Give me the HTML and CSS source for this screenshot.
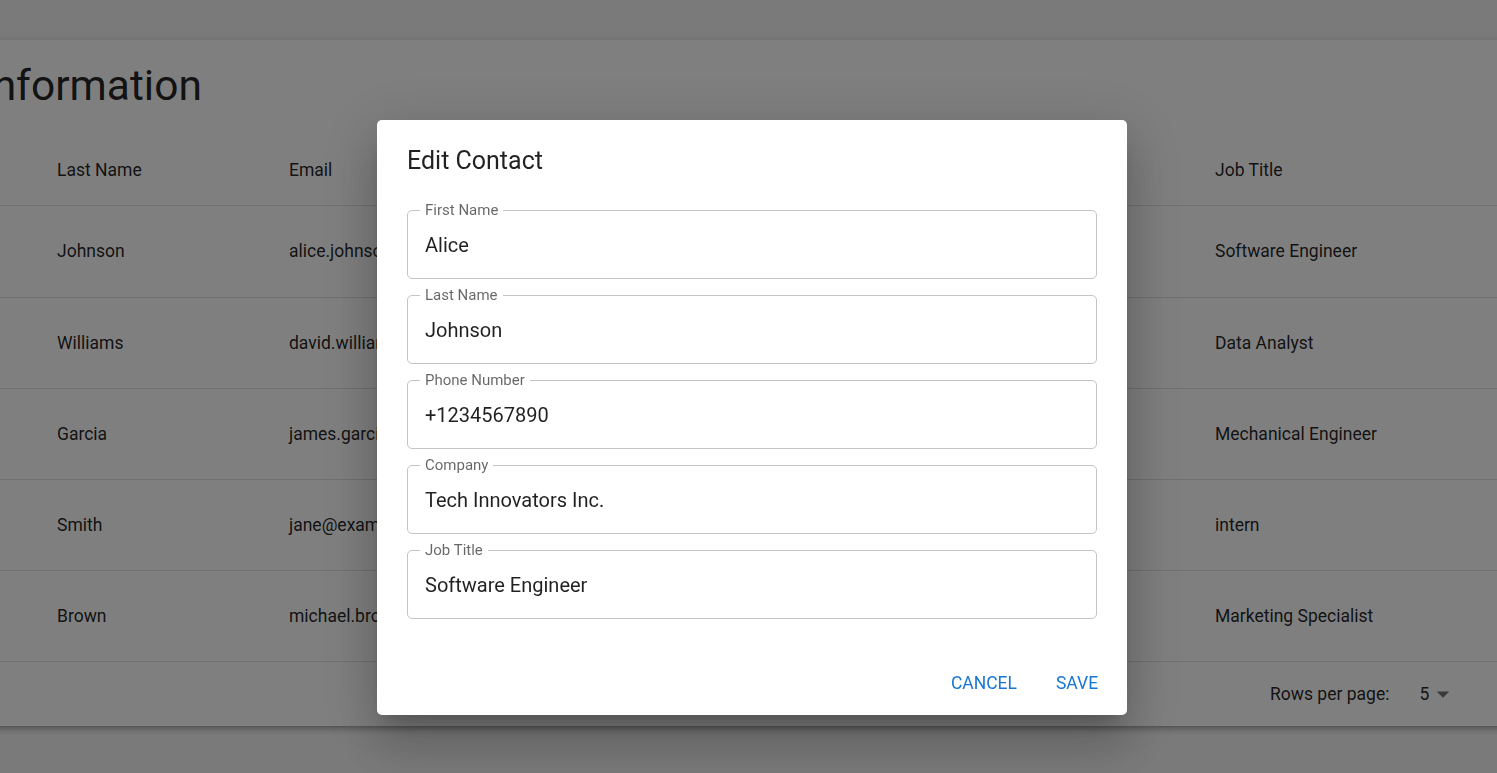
FILE: index.html
```html
<!DOCTYPE html>
<html lang="en">
<head>
<meta charset="utf-8">
<title>Contact Information</title>
<link rel="stylesheet" href="styles.css">
</head>
<body>
<div class="page">
  <div class="card">
    <h1 class="card-title">Contact Information</h1>
    <table class="table">
      <colgroup>
        <col class="c-first"><col class="c-last"><col class="c-email"><col class="c-phone"><col class="c-company"><col class="c-job"><col class="c-actions">
      </colgroup>
      <thead>
        <tr><th>First Name</th><th>Last Name</th><th>Email</th><th>Phone Number</th><th>Company</th><th>Job Title</th><th>Actions</th></tr>
      </thead>
      <tbody>
        <tr><td>Alice</td><td>Johnson</td><td>alice.johnson@example.com</td><td>+1234567890</td><td>Tech Innovators Inc.</td><td>Software Engineer</td><td class="act"><span class="icon-btn">✎</span><span class="icon-btn">🗑</span></td></tr>
        <tr><td>David</td><td>Williams</td><td>david.williams@example.com</td><td>+1987654321</td><td>Data Insights LLC</td><td>Data Analyst</td><td class="act"><span class="icon-btn">✎</span><span class="icon-btn">🗑</span></td></tr>
        <tr><td>James</td><td>Garcia</td><td>james.garcia@example.com</td><td>+1122334455</td><td>BuildTech Corp.</td><td>Mechanical Engineer</td><td class="act"><span class="icon-btn">✎</span><span class="icon-btn">🗑</span></td></tr>
        <tr><td>Jane</td><td>Smith</td><td>jane@example.com</td><td>+1555666777</td><td>Startup Co.</td><td>intern</td><td class="act"><span class="icon-btn">✎</span><span class="icon-btn">🗑</span></td></tr>
        <tr><td>Michael</td><td>Brown</td><td>michael.brown@example.com</td><td>+1444333222</td><td>MarketPro Agency</td><td>Marketing Specialist</td><td class="act"><span class="icon-btn">✎</span><span class="icon-btn">🗑</span></td></tr>
      </tbody>
    </table>
    <div class="pagination">
      <span class="pg-label">Rows per page:</span>
      <div class="pg-select">
        <span>5</span>
        <svg class="pg-arrow" viewBox="0 0 24 24" width="30" height="30"><path d="M7 10l5 5 5-5z"/></svg>
      </div>
      <span class="pg-count">1–5 of 5</span>
      <div class="pg-actions">
        <span class="pg-btn"><svg viewBox="0 0 24 24" width="30" height="30"><path d="M15.41 7.41 14 6l-6 6 6 6 1.41-1.41L10.83 12z"/></svg></span>
        <span class="pg-btn"><svg viewBox="0 0 24 24" width="30" height="30"><path d="M10 6 8.59 7.41 13.17 12l-4.58 4.59L10 18l6-6z"/></svg></span>
      </div>
    </div>
  </div>
</div>

<div class="backdrop"></div>

<div class="dialog" role="dialog" aria-labelledby="dlg-title">
  <h2 class="dialog-title" id="dlg-title">Edit Contact</h2>
  <div class="dialog-content">
    <div class="field"><span class="field-label">First Name</span><span class="field-value">Alice</span></div>
    <div class="field"><span class="field-label">Last Name</span><span class="field-value">Johnson</span></div>
    <div class="field"><span class="field-label">Phone Number</span><span class="field-value">+1234567890</span></div>
    <div class="field"><span class="field-label">Company</span><span class="field-value">Tech Innovators Inc.</span></div>
    <div class="field"><span class="field-label">Job Title</span><span class="field-value">Software Engineer</span></div>
  </div>
  <div class="dialog-actions">
    <button class="text-btn" type="button">Cancel</button>
    <button class="text-btn" type="button">Save</button>
  </div>
</div>
</body>
</html>
```

FILE: styles.css
```css
html, body {
  margin: 0;
  padding: 0;
  overflow: hidden;
  height: 100%;
}

body {
  background: #f5f5f5;
  font-family: Roboto, "Liberation Sans", Arial, sans-serif;
  color: rgba(0, 0, 0, 0.87);
}

.page {
  padding-top: 40px;
}

.card {
  margin-left: -195px;
  width: 1884px;
  background: #fff;
  border-radius: 5px;
  box-shadow: 0 3px 4px -2px rgba(0, 0, 0, 0.2), 0 4px 6px 0 rgba(0, 0, 0, 0.14), 0 1px 11px 0 rgba(0, 0, 0, 0.12);
  padding-top: 20px;
}

.card-title {
  margin: 0 0 22px 0;
  padding-left: 17px;
  font-size: 42.5px;
  font-weight: 400;
  line-height: 52px;
  color: rgba(0, 0, 0, 0.87);
}

.table {
  width: 100%;
  border-collapse: collapse;
  table-layout: fixed;
  font-size: 17.5px;
}

.c-first { width: 232px; }
.c-last { width: 232px; }
.c-email { width: 300px; }
.c-phone { width: 300px; }
.c-company { width: 326px; }
.c-job { width: 340px; }
.c-actions { width: auto; }

.table th,
.table td {
  text-align: left;
  padding: 20px;
  border-bottom: 1px solid #e0e0e0;
  line-height: 30px;
  white-space: nowrap;
  overflow: hidden;
}

.table th {
  font-weight: 400;
  padding-top: 21px;
}

.table td {
  height: 50px;
  box-sizing: content-box;
}

.act {
  display: flex;
  gap: 4px;
}

.icon-btn {
  width: 50px;
  height: 50px;
  display: inline-flex;
  align-items: center;
  justify-content: center;
  color: rgba(0, 0, 0, 0.54);
  font-size: 22px;
}

.pagination {
  display: flex;
  align-items: center;
  justify-content: flex-end;
  height: 64px;
  padding-right: 0;
  font-size: 17.5px;
}

.pg-label {
  line-height: 30px;
}

.pg-select {
  display: flex;
  align-items: center;
  margin-left: 30px;
  margin-right: 40px;
}

.pg-arrow {
  fill: rgba(0, 0, 0, 0.54);
  margin-left: -1px;
}

.pg-count {
  line-height: 30px;
}

.pg-actions {
  display: flex;
  margin-left: 25px;
}

.pg-btn {
  width: 50px;
  height: 50px;
  display: inline-flex;
  align-items: center;
  justify-content: center;
  fill: rgba(0, 0, 0, 0.54);
}

.backdrop {
  position: fixed;
  inset: 0;
  background: rgba(0, 0, 0, 0.5);
}

.dialog {
  position: fixed;
  left: 377px;
  top: 120px;
  width: 750px;
  background: #fff;
  border-radius: 5px;
  box-shadow: 0 14px 19px -9px rgba(0, 0, 0, 0.2), 0 30px 48px 4px rgba(0, 0, 0, 0.14), 0 11px 58px 10px rgba(0, 0, 0, 0.12);
}

.dialog-title {
  margin: 0;
  padding: 21px 30px 19px;
  font-size: 25px;
  font-weight: 400;
  line-height: 40px;
  color: rgba(0, 0, 0, 0.87);
}

.dialog-content {
  display: flex;
  flex-direction: column;
  gap: 16px;
  padding: 10px 30px 30px;
}

.field {
  position: relative;
  box-sizing: border-box;
  height: 69px;
  border: 1px solid #c4c4c4;
  border-radius: 5px;
  display: flex;
  align-items: center;
  padding: 1px 17px 0;
}

.field-label {
  position: absolute;
  top: -10px;
  left: 12px;
  padding: 0 5px;
  background: #fff;
  font-size: 15px;
  line-height: 19px;
  color: rgba(0, 0, 0, 0.6);
}

.field-value {
  font-size: 20px;
  line-height: 29px;
  color: rgba(0, 0, 0, 0.87);
}

.dialog-actions {
  display: flex;
  justify-content: flex-end;
  gap: 10px;
  padding: 10px;
}

.text-btn {
  min-width: 80px;
  padding: 8.5px 10px 6.5px;
  border: 0;
  background: none;
  font-family: inherit;
  font-size: 17.5px;
  font-weight: 400;
  line-height: 30.6px;
  letter-spacing: 0;
  text-transform: uppercase;
  color: #1976d2;
  border-radius: 5px;
  cursor: pointer;
}
```
